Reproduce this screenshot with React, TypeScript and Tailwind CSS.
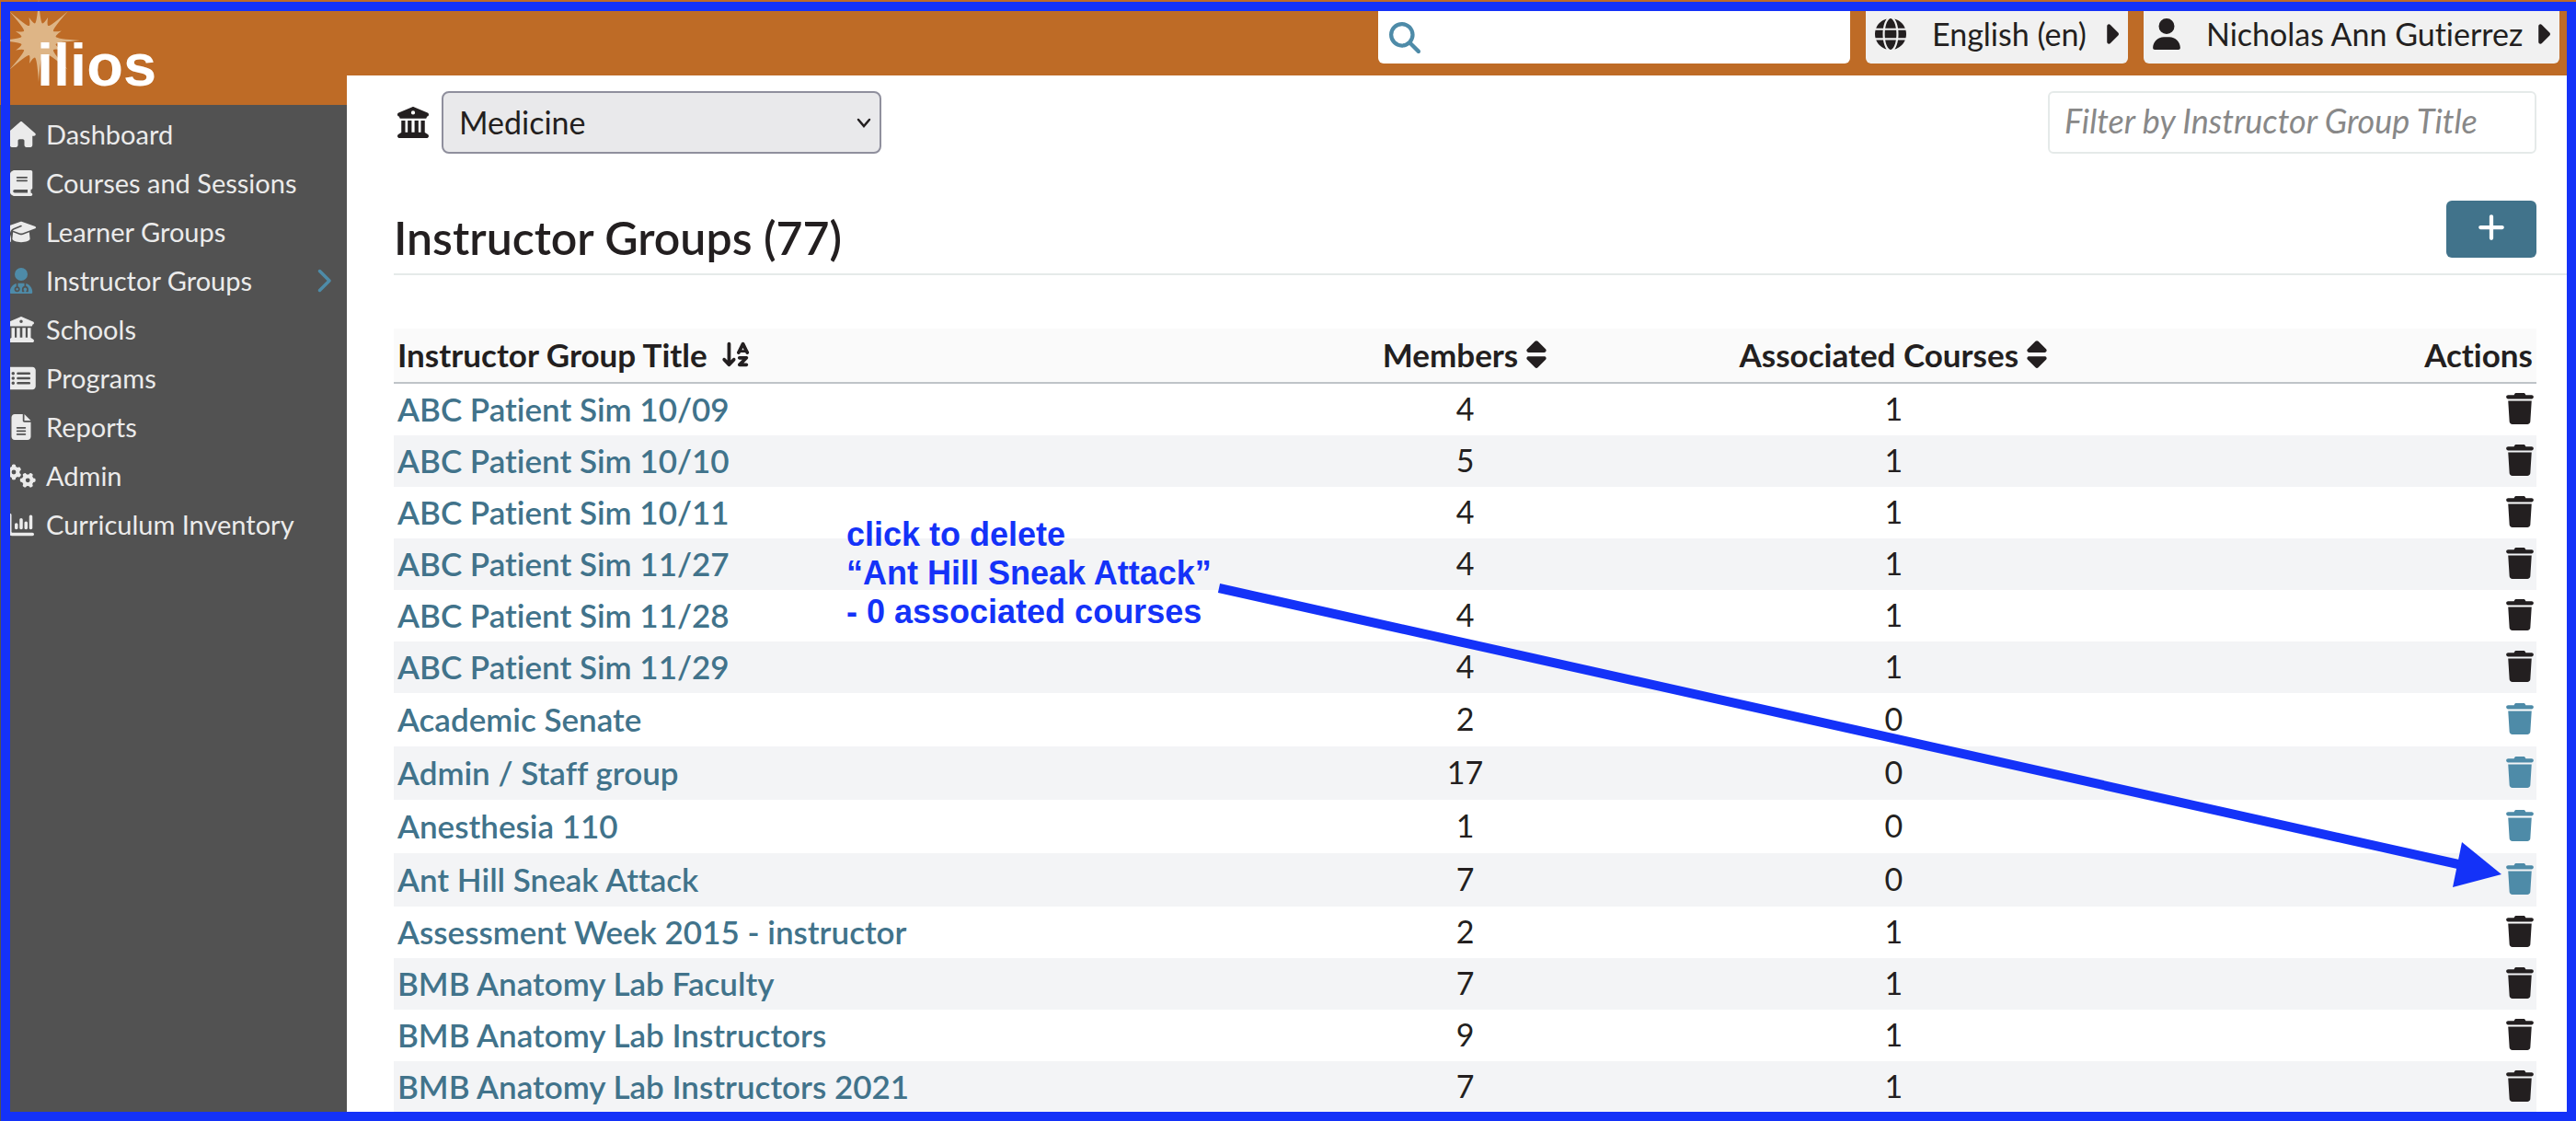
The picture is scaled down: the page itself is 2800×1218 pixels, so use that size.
import React from 'react';
import {
  FaArrowDownAZ,
  FaBook,
  FaBuildingColumns,
  FaCaretRight,
  FaChartColumn,
  FaChevronRight,
  FaFileLines,
  FaGears,
  FaGlobe,
  FaGraduationCap,
  FaHouse,
  FaMagnifyingGlass,
  FaPlus,
  FaRectangleList,
  FaSort,
  FaTrash,
  FaUser,
  FaUserDoctor,
} from 'react-icons/fa6';

const navItems = [
  { label: 'Dashboard', Icon: FaHouse },
  { label: 'Courses and Sessions', Icon: FaBook },
  { label: 'Learner Groups', Icon: FaGraduationCap },
  { label: 'Instructor Groups', Icon: FaUserDoctor, active: true },
  { label: 'Schools', Icon: FaBuildingColumns },
  { label: 'Programs', Icon: FaRectangleList },
  { label: 'Reports', Icon: FaFileLines },
  { label: 'Admin', Icon: FaGears },
  { label: 'Curriculum Inventory', Icon: FaChartColumn },
];

const groups = [
  { title: 'ABC Patient Sim 10/09', members: 4, courses: 1 },
  { title: 'ABC Patient Sim 10/10', members: 5, courses: 1 },
  { title: 'ABC Patient Sim 10/11', members: 4, courses: 1 },
  { title: 'ABC Patient Sim 11/27', members: 4, courses: 1 },
  { title: 'ABC Patient Sim 11/28', members: 4, courses: 1 },
  { title: 'ABC Patient Sim 11/29', members: 4, courses: 1 },
  { title: 'Academic Senate', members: 2, courses: 0 },
  { title: 'Admin / Staff group', members: 17, courses: 0 },
  { title: 'Anesthesia 110', members: 1, courses: 0 },
  { title: 'Ant Hill Sneak Attack', members: 7, courses: 0 },
  { title: 'Assessment Week 2015 - instructor', members: 2, courses: 1 },
  { title: 'BMB Anatomy Lab Faculty', members: 7, courses: 1 },
  { title: 'BMB Anatomy Lab Instructors', members: 9, courses: 1 },
  { title: 'BMB Anatomy Lab Instructors 2021', members: 7, courses: 1 },
];

// Sixteen-pointed star: long rays every 45 degrees with short ones between.
function sunPath() {
  const at = (r: number, deg: number) => {
    const a = (deg * Math.PI) / 180;
    return `${(42 + r * Math.sin(a)).toFixed(1)} ${(44 - r * Math.cos(a)).toFixed(1)}`;
  };
  let d = `M${at(45, 0)}`;
  for (let i = 0; i < 8; i++) {
    const a = i * 45;
    d += `Q${at(20, a + 5)} ${at(19, a + 12)}`;
    d += `Q${at(19, a + 17)} ${at(27, a + 22)}`;
    d += `Q${at(19, a + 28)} ${at(19, a + 33)}`;
    d += `Q${at(20, a + 40)} ${at(45, a + 45)}`;
  }
  return d + 'Z';
}

function Sidebar() {
  return (
    <aside className="w-[377px] shrink-0 bg-[#525252]">
      <div className="relative h-[114px] bg-[#be6b26] pt-[38px] pl-10">
        <svg className="absolute top-0 left-0 h-[90px] w-[90px]" viewBox="0 0 90 90" aria-hidden="true">
          <path d={sunPath()} fill="#deb586" />
        </svg>
        <a href="#home" className="relative block font-['Liberation_Sans',sans-serif] text-[65px] leading-[66px] font-bold text-white">
          ilios
        </a>
      </div>
      <nav aria-label="Main" className="pt-[5px]">
        <ul>
          {navItems.map(({ label, Icon, active }) => (
            <li key={label}>
              <a href="#nav" className="flex h-[53px] items-center gap-[10px] pr-[17px] pl-[5px] text-[29px] text-[#ebebeb]">
                <span className={active ? 'flex w-[35px] justify-center text-[#4e8ba8]' : 'flex w-[35px] justify-center'}>
                  <Icon className="h-7 w-8" />
                </span>
                <span className="flex-1">{label}</span>
                {active && <FaChevronRight className="h-7 w-[18px] text-[#4e8ba8]" />}
              </a>
            </li>
          ))}
        </ul>
      </nav>
    </aside>
  );
}

function TopBar() {
  return (
    <header className="flex h-[82px] items-start justify-end gap-[17px] bg-[#be6b26] pt-1 pr-[18px]">
      <label className="flex h-[65px] w-[513px] items-center gap-3 rounded-md bg-white pt-2 pl-3 text-[#4e8ba8]">
        <FaMagnifyingGlass className="h-[34px] w-[34px] shrink-0" />
        <input aria-label="Search" type="search" className="w-full min-w-0 text-[34px] text-[#231f20] outline-none" />
      </label>
      <button className="flex h-[65px] min-w-[285px] items-center rounded-md bg-[#f1f1f1] px-[10px]">
        <FaGlobe className="mr-7 h-[34px] w-[34px]" />
        English (en)
        <FaCaretRight className="ml-auto h-[34px] w-[17px]" />
      </button>
      <button className="flex h-[65px] min-w-[452px] items-center rounded-md bg-[#f1f1f1] px-[10px]">
        <FaUser className="mr-7 h-[34px] w-[30px]" />
        Nicholas Ann Gutierrez
        <FaCaretRight className="ml-auto h-[34px] w-[17px]" />
      </button>
    </header>
  );
}

function GroupTable() {
  return (
    <table className="w-full table-fixed border-separate border-spacing-0">
      <thead>
        <tr className="h-[60px] bg-[#fafafa] text-[35px] leading-[42px]">
          <th scope="col" className="w-2/5 border-b-2 border-[#bfc4c8] px-1 pt-0 pb-0.5 text-left">
            <button className="inline-flex items-center gap-[14px] font-bold">
              Instructor Group Title <FaArrowDownAZ className="h-[34px] w-[34px]" />
            </button>
          </th>
          <th scope="col" className="w-1/5 border-b-2 border-[#bfc4c8] px-0 pt-0 pb-0.5">
            <button className="inline-flex items-center gap-2 font-bold">
              Members <FaSort className="h-[34px] w-6" />
            </button>
          </th>
          <th scope="col" className="w-1/5 border-b-2 border-[#bfc4c8] px-0 pt-0 pb-0.5">
            <button className="inline-flex items-center gap-2 font-bold">
              Associated Courses <FaSort className="h-[34px] w-6" />
            </button>
          </th>
          <th scope="col" className="w-1/5 border-b-2 border-[#bfc4c8] px-1 pt-0 pb-0.5 text-right font-bold">Actions</th>
        </tr>
      </thead>
      <tbody>
        {groups.map(({ title, members, courses }) => (
          <tr
            key={title}
            className={courses === 0 ? 'h-[58px] leading-[42px] even:bg-[#f3f4f6]' : 'h-14 leading-[42px] even:bg-[#f3f4f6]'}
          >
            <td className="px-1 pt-0 pb-0.5 text-[35px] whitespace-nowrap">
              <a href="#group" className="font-semibold text-[#41738b]">{title}</a>
            </td>
            <td className="px-0 pt-0 pb-0.5 text-center">{members}</td>
            <td className="px-0 pt-0 pb-0.5 text-center">{courses}</td>
            <td className="px-[3px] pt-0 pb-0.5">
              <button
                aria-label={`Delete ${title}`}
                disabled={courses > 0}
                className={courses === 0 ? 'ml-auto block text-[#4e8ba8]' : 'ml-auto block'}
              >
                <FaTrash className="h-[34px] w-[30px]" />
              </button>
            </td>
          </tr>
        ))}
      </tbody>
    </table>
  );
}

function Annotation() {
  return (
    <div className="pointer-events-none absolute inset-0">
      <div className="absolute top-0.5 right-0 bottom-0 left-px border-[10px] border-[#1432f8]" />
      <p className="absolute top-[560px] left-[920px] font-['Liberation_Sans',sans-serif] text-[36px] leading-[42px] font-bold whitespace-nowrap text-[#1432f8]">
        click to delete
        <br />
        “Ant Hill Sneak Attack”
        <br />- 0 associated courses
      </p>
      <svg className="absolute top-[620px] left-[1310px] h-[360px] w-[1420px]" viewBox="1310 620 1420 360" fill="#1432f8" aria-hidden="true">
        <path d="M1325 639 2672 939" stroke="#1432f8" strokeWidth="10" />
        <path d="M2676 915 2719 950 2666 964Z" />
      </svg>
    </div>
  );
}

export default function App() {
  return (
    <div className="relative flex min-h-screen overflow-hidden bg-white font-[Lato,sans-serif] text-[34px] leading-[42px] text-[#231f20] [font-variant-ligatures:none]">
      <Sidebar />
      <div className="min-w-0 flex-1">
        <TopBar />
        <main className="pt-[17px] pl-[51px]">
          <div className="flex items-center pr-[43px] pl-1">
            <FaBuildingColumns className="mr-[14px] h-[34px] w-[34px]" />
            <div className="relative w-[478px]">
              <select aria-label="School" className="h-[68px] w-full appearance-none rounded-lg border-2 border-[#8f8f9d] bg-[#e9e9eb] px-[17px]">
                <option>Medicine</option>
              </select>
              <svg className="absolute top-[29px] right-[11px] h-3 w-4" viewBox="0 0 16 12" fill="none" stroke="#231f20" strokeWidth="2.500" strokeLinecap="round" aria-hidden="true">
                <path d="M2 2 8 9 14 2" />
              </svg>
            </div>
            <input
              aria-label="Filter by Instructor Group Title"
              placeholder="Filter by Instructor Group Title"
              className="ml-auto h-[68px] w-[531px] rounded-md border-2 border-[#e5eae9] px-4 pb-1 text-[36px] placeholder:text-[#888888] placeholder:italic"
            />
          </div>
          <div className="mt-[51px] flex items-start justify-between border-b-2 border-[#e5eae9] pr-[43px] pb-[9px]">
            <h1 className="mt-[10px] text-[50px] leading-[60px] font-semibold">Instructor Groups (77)</h1>
            <button aria-label="Add instructor group" className="flex h-[62px] w-[98px] items-center justify-center rounded-md bg-[#41738b] text-white">
              <FaPlus className="mb-1 h-[34px] w-[34px]" />
            </button>
          </div>
          <div className="mt-[58px] pr-[43px]">
            <GroupTable />
          </div>
        </main>
      </div>
      <Annotation />
    </div>
  );
}
